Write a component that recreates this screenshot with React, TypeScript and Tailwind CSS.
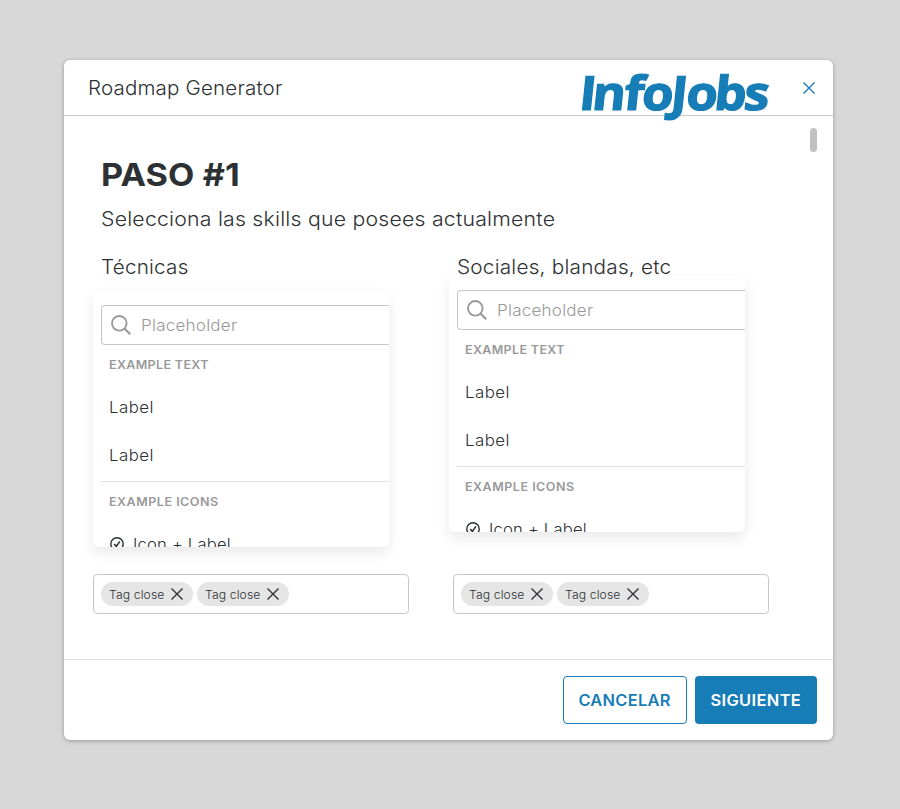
function SearchIcon() {
  return (
    <svg className="size-5 shrink-0" viewBox="0 0 20 20" fill="none" stroke="#999999" strokeWidth="1.9">
      <circle cx="8.3" cy="8.3" r="7.3" />
      <path d="M13.5 13.5 L19.2 19.2" strokeWidth="2.2" />
    </svg>
  );
}

function CheckIcon() {
  return (
    <svg className="size-4 shrink-0 -translate-y-px" viewBox="0 0 16 16" fill="none" stroke="#2d3133" strokeWidth="1.4">
      <circle cx="8" cy="8" r="6.2" />
      <path d="M5.2 8 L7.3 10.4 L10.9 5.4" strokeWidth="1.6" />
    </svg>
  );
}

function CloseIcon({ className }: { className: string }) {
  return (
    <svg className={className} viewBox="0 0 12 12" fill="none" stroke="currentColor" strokeWidth="1.4">
      <path d="M0.5 0.5 L11.5 11.5 M11.5 0.5 L0.5 11.5" />
    </svg>
  );
}

function Logo() {
  return (
    <svg className="h-[56px] w-[190px] shrink-0 overflow-visible" viewBox="0 0 190 56" role="img" aria-label="InfoJobs">
      <g transform="translate(0 42.5) skewX(-6) scale(1.04 0.96)">
        <text
          x="-2 10.5 41 58.5 86 101 128 156.5"
          y="0"
          className="fill-[#167db7] stroke-[#167db7] stroke-[1.3px] font-['Open_Sans',sans-serif] text-[49px] font-bold"
        >
          InfoJobs
        </text>
      </g>
    </svg>
  );
}

function Tag() {
  return (
    <span className="flex h-6 w-[92px] items-center justify-between rounded-full bg-[#e5e5e5] pr-[10px] pl-2 text-[#2d3133]">
      <span className="origin-left scale-x-[1.06] pt-px text-[11.5px] leading-4 tracking-[0.1px] whitespace-nowrap">Tag close</span>
      <CloseIcon className="size-3" />
    </span>
  );
}

function TagField() {
  return (
    <div className="flex h-10 w-[316px] items-center gap-1 rounded-[4px] border border-[#c7c8c9] px-[7px]">
      <Tag />
      <Tag />
    </div>
  );
}

function SkillMenu() {
  return (
    <div className="h-[256px] w-[296px] overflow-hidden rounded-[6px] bg-white pt-[14px] pl-2 shadow-[0_6px_14px_rgba(0,0,0,0.09)]">
      <div className="flex h-10 items-center rounded-l-[4px] border border-r-0 border-[#c7c8c9] pl-[9px]">
        <SearchIcon />
        <span className="mt-px ml-[10px] origin-left scale-x-[1.1] text-[15.5px] tracking-[0.2px] text-[#999999]">Placeholder</span>
      </div>
      <div className="pl-2">
        <div className="flex h-[39px] origin-left scale-x-[1.09] items-center pt-0.5 text-[11.5px] font-semibold tracking-[0.3px] text-[#999999]">EXAMPLE TEXT</div>
        <div className="flex h-12 origin-left scale-x-[1.09] items-center text-[15.5px] tracking-[0.4px]">Label</div>
        <div className="flex h-12 origin-left scale-x-[1.09] items-center text-[15.5px] tracking-[0.4px]">Label</div>
      </div>
      <div className="mt-px border-t border-[#e0e1e2] pl-2">
        <div className="flex h-[39px] origin-left scale-x-[1.09] items-center pt-0.5 text-[11.5px] font-semibold tracking-[0.45px] text-[#999999]">EXAMPLE ICONS</div>
        <div className="flex h-12 items-center gap-2 text-[15.5px] tracking-[0.2px]">
          <CheckIcon />
          <span className="origin-left scale-x-[1.07]">Icon + Label</span>
        </div>
      </div>
    </div>
  );
}

export default function App() {
  return (
    <div className="flex h-[809px] w-[900px] bg-[#d8d8d8] pt-[60px] pl-16 font-['Inter',sans-serif] font-light text-[#2d3133]">
      <div className="flex h-[680px] w-[769px] flex-col rounded-[6px] bg-white shadow-[0_1px_4px_rgba(0,0,0,0.3)]">
        <header className="flex h-14 items-center border-b border-[#c7c8c9] pr-[18px] pl-6">
          <h2 className="origin-left scale-x-[1.055] text-[19.5px] leading-7 tracking-[0.15px]">Roadmap Generator</h2>
          <div className="mt-[14px] ml-auto">
            <Logo />
          </div>
          <button className="ml-[33px] text-[#167db7]">
            <CloseIcon className="size-3" />
          </button>
        </header>

        <main className="flex h-[543px] pr-4 pl-[29px]">
          <div className="w-[676px]">
            <h1 className="mt-[38px] ml-2 w-fit origin-left scale-x-[1.085] text-[31.5px] leading-[42px] font-bold tracking-[0.1px]">PASO #1</h1>
            <p className="mt-[9px] ml-2 w-fit origin-left scale-x-[1.09] text-[19.5px] leading-7 tracking-[0.2px]">
              Selecciona las skills que posees actualmente
            </p>
            <div className="mt-5 flex gap-[60px]">
              <section className="w-[296px]">
                <h3 className="relative z-10 mb-[10px] ml-2 w-fit origin-left scale-x-[1.06] text-[19.5px] leading-7 tracking-[0.2px]">Técnicas</h3>
                <SkillMenu />
              </section>
              <section className="w-[296px]">
                <h3 className="relative z-10 -mb-[5px] ml-2 w-fit origin-left scale-x-[1.065] text-[19.5px] leading-7 tracking-[0.2px]">Sociales, blandas, etc</h3>
                <SkillMenu />
              </section>
            </div>
            <div className="mt-[27px] flex gap-11">
              <TagField />
              <TagField />
            </div>
          </div>
          <div className="mt-3 ml-auto h-6 w-[7px] rounded-full bg-[#c1c1c1]" />
        </main>

        <footer className="flex flex-1 items-start justify-end gap-2 border-t border-[#e0e1e2] px-4 pt-4">
          <button className="flex h-12 w-[124px] items-center justify-center rounded-[4px] border border-[#167db7] pt-0.5 text-[15.5px] font-semibold tracking-[0.27px] text-[#167db7]">
            <span className="scale-x-[1.06]">CANCELAR</span>
          </button>
          <button className="flex h-12 w-[122px] items-center justify-center rounded-[4px] bg-[#167db7] pt-0.5 text-[15.5px] font-semibold tracking-[0.35px] text-white">
            <span className="scale-x-[1.06]">SIGUIENTE</span>
          </button>
        </footer>
      </div>
    </div>
  );
}
